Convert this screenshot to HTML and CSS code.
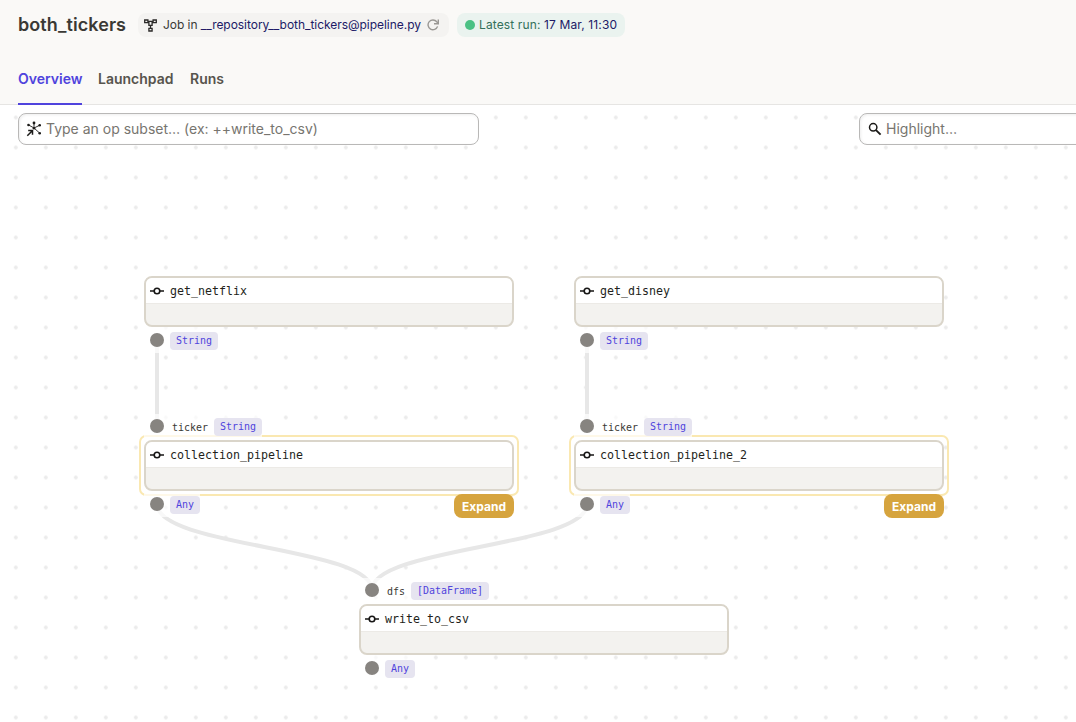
FILE: index.html
```html
<!DOCTYPE html>
<html lang="en">
<head>
<meta charset="utf-8">
<title>both_tickers</title>
<link rel="stylesheet" href="styles.css">
</head>
<body>
<svg class="defs" aria-hidden="true">
  <symbol id="op" viewBox="0 0 14 10"><path d="M0 5h4M10 5h4" stroke="#171615" stroke-width="1.7"/><circle cx="7" cy="5" r="2.8" fill="none" stroke="#171615" stroke-width="1.6"/></symbol>
</svg>
<header class="header">
  <div class="title-row">
    <h1 class="title">both_tickers</h1>
    <div class="tag job">
      <svg class="job-icon" width="13" height="13" viewBox="0 0 13 13" fill="none" stroke="#2b2a28" stroke-width="1.3"><path d="M.7 1h3.2v2.7H.7zM9.1 1h3.2v2.7H9.1zM4.9 9.3h3.2V12H4.9zM3.9 2.3h5.2M4.9 2.3v4h3.2v-4M6.5 6.3v3"/></svg>
      <span class="tag-text">Job in <a class="link">__repository__both_tickers@pipeline.py</a></span>
      <svg class="reload" width="12" height="12" viewBox="0 0 12 12" fill="none" stroke="#9a9894" stroke-width="1.4"><path d="M10.6 7.4A4.9 4.9 0 1 1 9.8 2.8L10.8 4"/><path d="M11.3.5v4.3H7"/></svg>
    </div>
    <div class="tag run"><i class="status"></i><span class="run-text">Latest run: <a class="link">17 Mar, 11:30</a></span></div>
  </div>
  <nav class="tabs">
    <a class="tab active">Overview</a>
    <a class="tab launch">Launchpad</a>
    <a class="tab">Runs</a>
  </nav>
</header>
<main class="canvas">
  <div class="toolbar">
    <div class="field subset">
      <svg width="16" height="16" viewBox="0 0 16 16" stroke="#1b1a18" fill="#1b1a18"><path d="M8 7V2.5M8 7l5-2.4M8 7L3 4.2M8 7l5 4.5" stroke-width=".9"/><path d="M2.2 9.4h4.3v4.3M6.3 9.7L1.3 14.7" fill="none" stroke-width="1.5"/><g stroke="none"><circle cx="8" cy="2" r="1.4"/><circle cx="2.5" cy="4" r="1.3"/><circle cx="13.7" cy="4.2" r="1.3"/><circle cx="13.7" cy="12.2" r="1.3"/><circle cx="8" cy="7.2" r="1.3"/></g></svg>
      <span class="field-text">Type an op subset… (ex: ++write_to_csv)</span>
    </div>
    <div class="field highlight">
      <svg width="14" height="14" viewBox="0 0 14 14" fill="none" stroke="#1b1a18"><circle cx="5.2" cy="5.3" r="3.7" stroke-width="1.5"/><path d="M8 8.1l4.6 4.6" stroke-width="1.9"/></svg>
      <span class="field-text">Highlight…</span>
    </div>
  </div>

  <svg class="edges" width="1076" height="617" viewBox="0 105 1076 617" fill="none" stroke="#e7e7e7" stroke-width="4">
    <path d="M157 340V426M587 340V426M157 504C157 547 372 547 372 590M587 504C587 547 372 547 372 590"/>
  </svg>

  <section class="node n1">
    <div class="box"><div class="name"><svg class="op"><use href="#op"/></svg>get_netflix</div></div>
    <div class="port out"><i class="dot"></i><b class="type">String</b></div>
  </section>
  <section class="node n2">
    <div class="box"><div class="name"><svg class="op"><use href="#op"/></svg>get_disney</div></div>
    <div class="port out"><i class="dot"></i><b class="type">String</b></div>
  </section>
  <section class="node n3">
    <div class="composite"></div>
    <div class="port in"><i class="dot"></i><span class="arg">ticker</span><b class="type">String</b></div>
    <div class="box"><div class="name"><svg class="op"><use href="#op"/></svg>collection_pipeline</div></div>
    <div class="port out"><i class="dot"></i><b class="type">Any</b></div>
    <button class="expand">Expand</button>
  </section>
  <section class="node n4">
    <div class="composite"></div>
    <div class="port in"><i class="dot"></i><span class="arg">ticker</span><b class="type">String</b></div>
    <div class="box"><div class="name"><svg class="op"><use href="#op"/></svg>collection_pipeline_2</div></div>
    <div class="port out"><i class="dot"></i><b class="type">Any</b></div>
    <button class="expand">Expand</button>
  </section>
  <section class="node n5">
    <div class="port in"><i class="dot"></i><span class="arg">dfs</span><b class="type">[DataFrame]</b></div>
    <div class="box"><div class="name"><svg class="op"><use href="#op"/></svg>write_to_csv</div></div>
    <div class="port out"><i class="dot"></i><b class="type">Any</b></div>
  </section>
</main>
</body>
</html>
```
FILE: styles.css
```css
* { box-sizing: border-box; }
body { margin: 0; width: 1076px; height: 722px; overflow: hidden; background: #fff; font-family: Inter, sans-serif; color: #3a3935; }
.defs { position: absolute; width: 0; height: 0; }
.header { height: 105px; background: #faf9f7; border-bottom: 1px solid #e6e5e3; padding: 13px 18px 0; display: flex; flex-direction: column; justify-content: space-between; }
.title-row { display: flex; align-items: center; height: 24px; }
.title { margin: 0; width: 108px; font-size: 18px; letter-spacing: .08px; font-weight: 600; line-height: 24px; white-space: nowrap; }
.tag { height: 24px; border-radius: 8px; display: flex; align-items: center; font-size: 12px; white-space: nowrap; }
.job { margin-left: 12px; width: 311px; background: #f4f3f1; padding-left: 6px; }
.tag-text { margin-left: 6px; width: 258px; padding-bottom: 1px; letter-spacing: -.04px; }
.link { color: #201a66; }
.reload { margin-left: 6px; }
.run { margin-left: 8px; width: 168px; background: #eaf3ef; padding-left: 8px; color: #33705a; }
.run-text { padding-bottom: 1px; letter-spacing: .13px; }
.status { width: 10px; height: 10px; border-radius: 50%; background: #4bc184; margin-right: 4px; }
.tabs { display: flex; gap: 16px; margin-bottom: -1px; }
.tab { height: 36px; font-size: 14px; line-height: 20px; font-weight: 600; color: #57544d; white-space: nowrap; }
.active { width: 64px; color: #4f43dd; border-bottom: 2px solid #4f43dd; }
.launch { width: 76px; }
.canvas { position: relative; height: 617px; overflow: hidden; background: radial-gradient(circle at 15px 15px, #ebebeb 1.5px, transparent 2.2px) 0.8px -2.5px / 30px 30px #fff; }
.toolbar { display: flex; padding: 8px 0 0 18px; gap: 380px; }
.field { height: 32px; flex: none; background: #fff; border: 1px solid #b9b8b7; border-radius: 8px; box-shadow: inset 1px 1px 3px #0001; display: flex; align-items: center; font-size: 14px; color: #77756f; white-space: nowrap; }
.field-text { padding-bottom: 2px; }
.subset { width: 461px; padding-left: 7px; gap: 4px; }
.highlight { width: 240px; padding-left: 8px; gap: 4px; }
.edges { position: absolute; left: 0; top: 0; }
.node { position: absolute; width: 370px; font-family: "DejaVu Sans Mono", monospace; }
.n1 { left: 144px; top: 171px; }
.n2 { left: 574px; top: 171px; }
.n3 { left: 144px; top: 309px; }
.n4 { left: 574px; top: 309px; }
.n5 { left: 359px; top: 473px; }
.box { position: relative; height: 51px; border: 2px solid #dad5ca; border-radius: 8px; background: #f3f2ef; overflow: hidden; }
.name { height: 26px; background: #fff; border-bottom: 1px solid #eceae6; display: flex; align-items: center; gap: 6px; padding: 0 0 0 4px; font-size: 11.63px; color: #231f1b; }
.op { width: 14px; height: 10px; }
.port { position: relative; height: 26px; padding-left: 4px; display: flex; align-items: center; width: max-content; background: #ffffffb3; }
.in { padding-bottom: 1px; }
.out { padding-top: 1px; }
.dot { width: 18px; height: 18px; border: 2px solid transparent; background: #878480 padding-box; border-radius: 50%; }
.in .dot, .out .dot { margin-bottom: 1px; }
.arg { margin-left: 6px; margin-right: 6px; padding-top: 1px; font-size: 9.97px; color: #3a3935; }
.type { height: 18px; border-radius: 4px; padding: 0 6px; background: #e6e4f0; color: #4f43dd; font-size: 9.97px; line-height: 18px; font-weight: 400; }
.out .type { margin-left: 4px; }
.composite { position: absolute; left: -5px; top: 21px; width: 380px; height: 61px; border: 2px solid #fae8b1; border-radius: 7px; }
.expand { position: absolute; left: 310px; top: 80px; width: 60px; height: 24px; padding: 0; border: 0; border-radius: 8px; background: #d6a43e; color: #fff; font: 700 12px Inter, sans-serif; }
```
